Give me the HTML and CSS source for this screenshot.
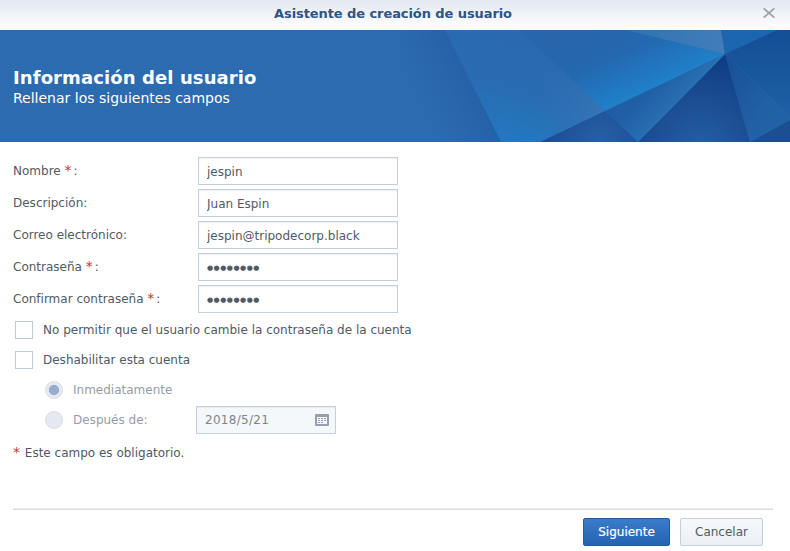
FILE: index.html
```html
<!DOCTYPE html>
<html lang="es">
<head>
<meta charset="utf-8">
<title>Asistente de creación de usuario</title>
<link rel="stylesheet" href="styles.css">
</head>
<body>
<div class="dialog">
  <header class="titlebar">
    <h1 class="title">Asistente de creación de usuario</h1>
    <svg class="close" width="12" height="10" viewBox="0 0 12 10"><path d="M.6.3 11.4 9.7M11.4.3.6 9.7" fill="none" stroke="#a0a4a9" stroke-width="1.8"/></svg>
  </header>
  <section class="banner">
    <svg class="facets" width="390" height="112" viewBox="0 0 390 112">
      <defs>
        <linearGradient id="a" gradientUnits="userSpaceOnUse" x1="24" y1="78" x2="74" y2="54"><stop offset="0" stop-color="#2d6bb1"/><stop offset="1" stop-color="#2561a7"/></linearGradient>
        <linearGradient id="b" gradientUnits="userSpaceOnUse" x1="130" y1="5" x2="98" y2="114"><stop offset="0" stop-color="#2b69af"/><stop offset=".5" stop-color="#296cb3"/><stop offset="1" stop-color="#2379c1"/></linearGradient>
        <linearGradient id="c" gradientUnits="userSpaceOnUse" x1="190" y1="0" x2="225" y2="76"><stop offset="0" stop-color="#2865ab"/><stop offset=".4" stop-color="#2368b0"/><stop offset="1" stop-color="#1f83cb"/></linearGradient>
        <linearGradient id="d" gradientUnits="userSpaceOnUse" x1="252" y1="59" x2="273" y2="79"><stop offset="0" stop-color="#205fa5"/><stop offset="1" stop-color="#2871b3"/></linearGradient>
        <radialGradient id="e" gradientUnits="userSpaceOnUse" cx="300" cy="120" r="92"><stop offset="0" stop-color="#255fa4"/><stop offset=".5" stop-color="#1c4f94"/><stop offset="1" stop-color="#103d84"/></radialGradient>
        <linearGradient id="f" x1="0" y1="0" x2="1" y2="1"><stop offset="0" stop-color="#184e94"/><stop offset=".6" stop-color="#2160a4"/><stop offset="1" stop-color="#2264a7"/></linearGradient>
        <linearGradient id="g" x1="0" y1="0" x2="0" y2="1"><stop offset="0" stop-color="#144e94"/><stop offset="1" stop-color="#1d60a5"/></linearGradient>
        <radialGradient id="h" gradientUnits="userSpaceOnUse" cx="200" cy="112" r="55"><stop offset="0" stop-color="#2560a6"/><stop offset="1" stop-color="#1e4b91"/></radialGradient>
        <linearGradient id="i" x1="0" y1="0" x2="1" y2="0"><stop offset="0" stop-color="#2e72b2"/><stop offset="1" stop-color="#427db9"/></linearGradient>
        <radialGradient id="j" gradientUnits="userSpaceOnUse" cx="203" cy="84" r="70"><stop offset="0" stop-color="#3878b5" stop-opacity=".8"/><stop offset="1" stop-color="#3070b2" stop-opacity="0"/></radialGradient>
      </defs>
      <path d="M0 0H46L102 112H0Z" fill="url(#a)"/>
      <path d="M45 0H137L205 81 140 112H101Z" fill="url(#b)"/>
      <path d="M45 0H137L205 81 140 112H101Z" fill="url(#j)"/>
      <path d="M119 0H226L325 24 205 81Z" fill="url(#c)"/>
      <path d="M226 0H321L325 24Z" fill="url(#i)"/>
      <path d="M321 0H377L325 24Z" fill="#1c66af"/>
      <path d="M377 0H390V86L325 24Z" fill="url(#g)"/>
      <path d="M325 24 390 86V90L350 112Z" fill="url(#f)"/>
      <path d="M390 90V112H350Z" fill="#1b4f92"/>
      <path d="M325 24 350 112H238Z" fill="url(#e)"/>
      <path d="M325 24 238 112 205 81Z" fill="url(#d)"/>
      <path d="M205 81 238 112H140Z" fill="url(#h)"/>
    </svg>
    <h2 class="heading">Información del usuario</h2>
    <p class="subheading">Rellenar los siguientes campos</p>
  </section>
  <form class="form">
    <div class="row"><label for="n">Nombre <b class="req">*</b>:</label><input class="field" id="n" value="jespin"></div>
    <div class="row"><label for="d1">Descripción:</label><input class="field" id="d1" value="Juan Espin"></div>
    <div class="row"><label for="m">Correo electrónico:</label><input class="field" id="m" value="jespin@tripodecorp.black"></div>
    <div class="row"><label for="p">Contraseña <b class="req">*</b>:</label><input class="field secret" id="p" value="●●●●●●●●"></div>
    <div class="row"><label for="q">Confirmar contraseña <b class="req">*</b>:</label><input class="field secret" id="q" value="●●●●●●●●"></div>
    <label class="option"><i class="box"></i>No permitir que el usuario cambie la contraseña de la cuenta</label>
    <label class="option"><i class="box"></i>Deshabilitar esta cuenta</label>
    <label class="option sub"><i class="radio on"></i>Inmediatamente</label>
    <div class="option sub"><i class="radio"></i><span class="after">Después de:</span>
      <div class="date"><span>2018/5/21</span>
        <svg width="14" height="12" viewBox="0 0 14 12"><rect width="14" height="12" rx="1" fill="#969fab"/><path d="M2 3h10v7H2z" fill="#f5f7fa"/><path d="M3 4.5h8M3 6.5h8M3 8.5h5" stroke="#969fab" stroke-dasharray="2 1"/></svg>
      </div>
    </div>
    <p class="note"><b class="req">*</b> Este campo es obligatorio.</p>
  </form>
  <footer class="footer">
    <button class="btn primary">Siguiente</button>
    <button class="btn">Cancelar</button>
  </footer>
</div>
</body>
</html>
```
FILE: styles.css
```css
* { box-sizing: border-box; }
body {
  margin: 0;
  background: #fff;
  font: 12px/18px Verdana, "DejaVu Sans", sans-serif;
  color: #505a64;
}
h1, h2, p { margin: 0; }
.dialog { height: 551px; display: flex; flex-direction: column; overflow: hidden; }
.titlebar {
  height: 30px;
  flex: none;
  display: grid;
  grid-template-columns: 40px 1fr 40px;
  background: linear-gradient(#e3e8f1, #fff);
}
.title { grid-column: 2; font-size: 13px; letter-spacing: -.08px; line-height: 27px; text-align: center; color: #2d5585; padding-right: 4px; }
.close { margin: 8px 0 0 13px; }
.banner {
  position: relative;
  height: 112px;
  flex: none;
  padding: 36px 13px 0;
  background: #2d6bb1;
  color: #fff;
}
.facets { position: absolute; top: 0; right: 0; }
.heading { font-size: 18px; line-height: 24px; letter-spacing: .1px; }
.subheading { font-size: 14px; line-height: 16px; }
.form { flex: 1; padding: 15px 13px 0; }
.row { display: flex; height: 28px; margin-bottom: 4px; }
.row label { width: 185px; line-height: 28px; }
.req { display: inline-block; width: 8px; margin-right: 1px; font-size: 14px; font-weight: normal; line-height: 1; color: #c0392b; }
.field {
  width: 200px;
  height: 28px;
  padding: 1px 8px 0;
  border: 1px solid #c6cfda;
  border-radius: 0;
  background: #fff;
  box-shadow: inset 0 1px 1px #edf0f4;
  font: inherit;
  color: #505a64;
  outline: 0;
}
.secret { font-size: 7px; letter-spacing: .5px; padding-top: 2px; }
.option { display: flex; align-items: center; height: 30px; padding-left: 2px; }
.row + .option { margin-top: -2px; }
.box { width: 18px; height: 18px; margin-right: 10px; border: 1px solid #bdc9d5; }
.sub { padding-left: 32px; color: #969da7; }
.radio {
  width: 18px;
  height: 18px;
  margin-right: 10px;
  border: 1px solid #d8dfe7;
  border-radius: 50%;
  background: #e5e9ef;
}
.radio.on { background: radial-gradient(circle, #96adcd 4.8px, #e5e9ef 5.3px); }
.after { width: 123px; }
.date {
  display: flex;
  align-items: center;
  justify-content: space-between;
  width: 140px;
  height: 28px;
  padding: 0 6px 0 8px;
  border: 1px solid #c6cfda;
  background: #f5f8fb;
  box-shadow: inset 0 1px 1px #e6eaee;
  color: #808488;
}
.date span { letter-spacing: .3px; }
.note { margin-top: 9px; }
.note .req { margin-right: 0; }
.footer {
  flex: none;
  height: 42px;
  margin: 0 17px 0 13px;
  padding: 8px 10px 0;
  display: flex;
  justify-content: flex-end;
  gap: 10px;
  border-top: 1px solid #dcdcdc;
  box-shadow: 0 -1px 0 #eee;
}
.btn {
  width: 83px;
  height: 28px;
  padding: 0;
  border: 1px solid #c3cfda;
  border-radius: 2px;
  background: linear-gradient(#f6f9fc, #ebf0f5);
  font: inherit;
  color: #505a64;
}
.primary { width: 87px; border-color: #2259a0; background: linear-gradient(#3a7cca, #2464b1); color: #fff; -webkit-text-stroke: .2px #fff; }
```
